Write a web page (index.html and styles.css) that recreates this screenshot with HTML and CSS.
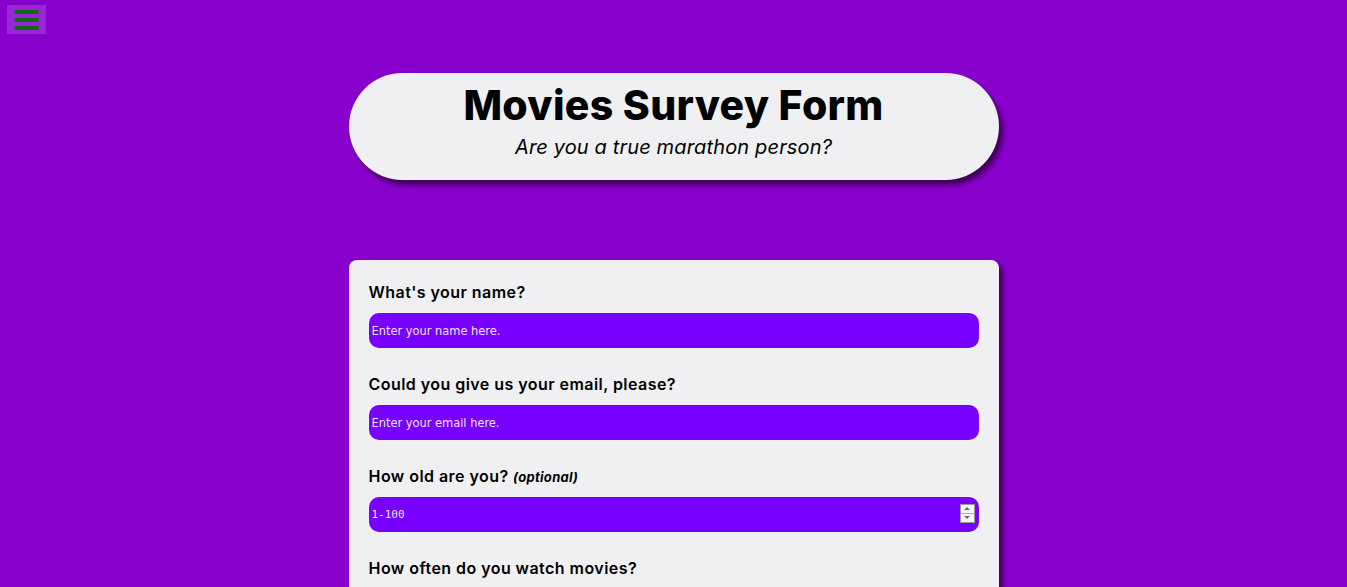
FILE: index.html
```html
<!DOCTYPE html>
<html lang="en">
<head>
<meta charset="utf-8">
<title>Movies Survey Form</title>
<link rel="stylesheet" href="styles.css">
</head>
<body>
<button class="menu-btn" type="button" aria-label="Menu">
  <span class="bar"></span><span class="bar"></span><span class="bar"></span>
</button>
<header class="hero">
  <h1 class="title">Movies Survey Form</h1>
  <p class="subtitle">Are you a true marathon person?</p>
</header>
<form class="survey">
  <div class="group">
    <label class="label" for="name">What's your name?</label>
    <input class="field" id="name" type="text" placeholder="Enter your name here.">
  </div>
  <div class="group">
    <label class="label" for="email">Could you give us your email, please?</label>
    <input class="field" id="email" type="email" placeholder="Enter your email here.">
  </div>
  <div class="group">
    <label class="label" for="age">How old are you? <em class="opt">(optional)</em></label>
    <div class="num-wrap">
      <input class="field mono" id="age" type="text" placeholder="1-100">
      <span class="spin"><span class="up"></span><span class="down"></span></span>
    </div>
  </div>
  <div class="group">
    <label class="label">How often do you watch movies?</label>
  </div>
</form>
</body>
</html>
```
FILE: styles.css
```css
html, body {
  margin: 0;
  padding: 0;
}
body {
  background: #8800cc;
  font-family: Inter, "Open Sans", sans-serif;
  min-height: 587px;
  display: flex;
  flex-direction: column;
  align-items: center;
  overflow: hidden;
}
.menu-btn {
  position: fixed;
  top: 5px;
  left: 7px;
  width: 39px;
  height: 29px;
  background: #9b25d9;
  border: none;
  padding: 0;
  display: flex;
  flex-direction: column;
  align-items: center;
  justify-content: center;
  gap: 4px;
}
.bar {
  display: block;
  width: 25px;
  height: 4px;
  border-radius: 2px;
  background: #0d6b16;
}
.hero {
  margin-top: 73px;
  width: 650px;
  height: 107px;
  box-sizing: border-box;
  background: #f0f0f3;
  border-radius: 54px;
  box-shadow: 4px 5px 5px rgba(40, 0, 50, 0.75);
  text-align: center;
  padding-top: 8px;
}
.title {
  margin: 0;
  font-size: 41px;
  font-weight: 800;
  line-height: 48px;
  letter-spacing: 0.3px;
  color: #000;
}
.subtitle {
  margin: 5px 0 0;
  font-size: 20px;
  font-style: italic;
  line-height: 26px;
  letter-spacing: 0.15px;
  color: #000;
}
.survey {
  margin-top: 80px;
  width: 650px;
  box-sizing: border-box;
  background: #f0f0f3;
  border-radius: 8px;
  box-shadow: 4px 4px 5px rgba(40, 0, 50, 0.75);
  padding: 20px 20px 40px;
}
.group {
  display: flex;
  flex-direction: column;
  margin-bottom: 24px;
}
.label {
  font-size: 16px;
  font-weight: 600;
  line-height: 24px;
  height: 24px;
  letter-spacing: 0.45px;
  color: #000;
  margin-bottom: 9px;
}
.opt {
  font-size: 13px;
  font-weight: 700;
  line-height: 1;
  letter-spacing: 0.3px;
}
.num-wrap {
  position: relative;
}
.field {
  width: 100%;
  box-sizing: border-box;
  height: 35px;
  border: none;
  border-radius: 10px;
  background: #7700ff;
  padding: 0 3px;
  font-family: "DejaVu Sans Condensed", "DejaVu Sans", sans-serif;
  font-size: 12.7px;
  color: #fff;
  outline: none;
}
.field::placeholder {
  color: #f1e3ff;
}
.field.mono {
  font-family: "DejaVu Sans Mono", monospace;
  font-size: 11px;
}
.spin {
  position: absolute;
  right: 4px;
  top: 7px;
  width: 15px;
  height: 19px;
  background: #f4f4f4;
  border: 1px solid #9a9a9a;
  box-sizing: border-box;
  display: flex;
  flex-direction: column;
}
.spin .up, .spin .down {
  flex: 1;
  position: relative;
}
.spin .up {
  border-bottom: 1px solid #b0b0b0;
}
.spin .up::after, .spin .down::after {
  content: "";
  position: absolute;
  left: 3px;
  width: 0;
  height: 0;
  border-left: 3px solid transparent;
  border-right: 3px solid transparent;
}
.spin .up::after {
  top: 2px;
  border-bottom: 3px solid #6a6a7a;
}
.spin .down::after {
  top: 2px;
  border-top: 3px solid #6a6a7a;
}
```
